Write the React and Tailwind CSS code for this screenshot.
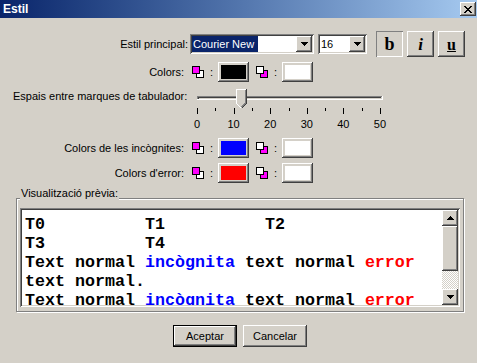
import React from "react";

const raised =
  "shadow-[inset_-1px_-1px_#404040,inset_1px_1px_#ffffff,inset_-2px_-2px_#808080,inset_2px_2px_#d4d0c8]";
const sunken =
  "shadow-[inset_1px_1px_#808080,inset_-1px_-1px_#ffffff,inset_2px_2px_#404040,inset_-2px_-2px_#d4d0c8]";

function Arrow({ up }) {
  const rows = [1, 3, 5, 7];
  const list = up ? rows : [...rows].reverse();
  return (
    <svg width="7" height="4" shapeRendering="crispEdges">
      {list.map((w, i) => (
        <rect key={i} x={(7 - w) / 2} y={i} width={w} height="1" fill="#000" />
      ))}
    </svg>
  );
}

function CloseGlyph() {
  const px = [];
  for (let i = 0; i < 7; i++) {
    px.push([i, i], [i + 1, i], [6 - i, i], [7 - i, i]);
  }
  return (
    <svg width="8" height="7" shapeRendering="crispEdges">
      {px.map(([x, y], i) => (
        <rect key={i} x={x} y={y} width="1" height="1" fill="#000" />
      ))}
    </svg>
  );
}

// two overlapping squares, the front one drawn last
function PairIcon({ front, back }) {
  return (
    <svg width="13" height="13" shapeRendering="crispEdges" className="shrink-0">
      <rect x="4.5" y="4.5" width="7" height="7" fill={back} stroke="#000" />
      <rect x="0.5" y="0.5" width="7" height="7" fill={front} stroke="#000" />
    </svg>
  );
}

function Swatch({ color }) {
  return (
    <div className={`w-[31px] h-[20px] p-[3px] bg-[#d4d0c8] ${raised}`}>
      <div className="w-full h-full" style={{ background: color }} />
    </div>
  );
}

function ColorRow({ label, color, mt }) {
  return (
    <div className={`flex items-center h-[20px] ${mt}`}>
      <div className="w-[184px] text-right">{label}</div>
      <div className="ml-[8px]">
        <PairIcon front="#ff00ff" back="#ffffff" />
      </div>
      <span className="w-[13px] text-center">:</span>
      <Swatch color={color} />
      <div className="ml-[7px]">
        <PairIcon front="#ffffff" back="#ff00ff" />
      </div>
      <span className="w-[13px] text-center">:</span>
      <Swatch color="#ffffff" />
    </div>
  );
}

function Slider() {
  const ticks = Array.from({ length: 11 }, (_, i) => Math.round(7 + i * 18.3));
  return (
    <svg width="200" height="30" shapeRendering="crispEdges">
      <rect x="7" y="10" width="185" height="1" fill="#808080" />
      <rect x="7" y="10" width="1" height="4" fill="#808080" />
      <rect x="8" y="11" width="183" height="1" fill="#404040" />
      <rect x="8" y="11" width="1" height="2" fill="#404040" />
      <rect x="7" y="13" width="186" height="1" fill="#ffffff" />
      <rect x="192" y="10" width="1" height="4" fill="#ffffff" />
      {ticks.map((x, i) => (
        <rect key={i} x={x} y="22" width="1" height={i % 2 === 0 ? 6 : 3} fill="#000" />
      ))}
      <polygon points="46,3 57,3 57,17 51.5,22.5 46,17" fill="#d4d0c8" />
      <path d="M46.5 17V3.5H55.5" stroke="#fff" fill="none" />
      <path d="M46.5 17.5L51 22" stroke="#fff" fill="none" />
      <path d="M56.5 3V17.5L51.5 22.5" stroke="#404040" fill="none" />
      <path d="M55.5 4V17L51.5 21" stroke="#808080" fill="none" />
    </svg>
  );
}

export default function App() {
  return (
    <div className="w-[477px] h-[363px] overflow-hidden bg-[#d4d0c8] font-['Liberation_Sans',Arial,sans-serif] text-[11px] leading-[13px] text-black">
      {/* title bar */}
      <div className="h-[18px] flex items-center justify-between pl-[3px] pr-[1px] bg-linear-to-r from-[#0a246a] to-[#a6caf0]">
        <span className="text-white font-bold text-[12px]">Estil</span>
        <div className={`w-[16px] h-[14px] flex items-center justify-center bg-[#d4d0c8] ${raised}`}>
          <CloseGlyph />
        </div>
      </div>

      {/* font row */}
      <div className="mt-[13px] h-[26px] flex items-center">
        <div className="w-[188px] text-right">Estil principal:</div>
        <div className={`ml-[2px] w-[124px] h-[20px] p-[2px] bg-white flex ${sunken}`}>
          <div className="flex-1">
            <div className="w-[66px] h-full bg-[#0a246a] text-white pl-[1px] leading-[16px]">Courier New</div>
          </div>
          <div className={`w-[16px] h-[16px] bg-[#d4d0c8] flex items-center justify-center ${raised}`}>
            <Arrow />
          </div>
        </div>
        <div className={`ml-[4px] w-[49px] h-[20px] p-[2px] bg-white flex ${sunken}`}>
          <div className="flex-1 pl-[1px] leading-[16px]">16</div>
          <div className={`w-[16px] h-[16px] bg-[#d4d0c8] flex items-center justify-center ${raised}`}>
            <Arrow />
          </div>
        </div>
        <div className="ml-[9px] flex gap-[4px]">
          <div className="w-[27px] h-[26px] flex items-center justify-center shadow-[inset_1px_1px_#808080,inset_-1px_-1px_#ffffff] font-['Liberation_Serif',serif] font-bold text-[18px]">
            b
          </div>
          <div className={`w-[27px] h-[26px] flex items-center justify-center ${raised} font-['Liberation_Serif',serif] font-bold italic text-[17px]`}>
            i
          </div>
          <div className={`w-[27px] h-[26px] flex items-center justify-center ${raised} font-['Liberation_Serif',serif] font-bold underline text-[16px]`}>
            u
          </div>
        </div>
      </div>

      <ColorRow label="Colors:" color="#000000" mt="mt-[5px]" />

      {/* tab spacing */}
      <div className="mt-[4px] h-[45px] flex">
        <div className="w-[190px] pl-[13px] h-[20px] leading-[20px]">Espais entre marques de tabulador:</div>
        <div className="w-[200px] flex flex-col">
          <Slider />
          <div className="mt-[3px] ml-[7px] w-[183px] flex justify-between">
            {[0, 10, 20, 30, 40, 50].map((n) => (
              <div key={n} className="w-0 flex justify-center whitespace-nowrap">
                {n}
              </div>
            ))}
          </div>
        </div>
      </div>

      <ColorRow label="Colors de les incògnites:" color="#0000ff" mt="mt-[7px]" />
      <ColorRow label="Colors d'error:" color="#ff0000" mt="mt-[5px]" />

      {/* preview group */}
      <div className="relative mt-[15px] ml-[16px] w-[448px] h-[114px] border border-[#808080] shadow-[inset_1px_1px_#ffffff,1px_1px_#ffffff] pl-[3px] pr-[3px] pt-[9px] pb-[4px]">
        <span className="absolute left-[3px] top-[-12px] px-[1px] bg-[#d4d0c8]">Visualització prèvia:</span>
        <div className={`h-[99px] p-[2px] bg-white flex ${sunken}`}>
          <div className="flex-1 overflow-hidden pl-[3px] pt-[5px] whitespace-pre font-['Liberation_Mono','Courier_New',monospace] font-bold text-[16.67px] leading-[19px]">
            <div>{"T0          T1          T2"}</div>
            <div>{"T3          T4"}</div>
            <div>
              Text normal <span className="text-[#0000ff]">incògnita</span> text normal{" "}
              <span className="text-[#ff0000]">error</span>
            </div>
            <div>text normal.</div>
            <div>
              Text normal <span className="text-[#0000ff]">incògnita</span> text normal{" "}
              <span className="text-[#ff0000]">error</span>
            </div>
          </div>
          <div className="w-[16px] flex flex-col">
            <div className={`h-[16px] bg-[#d4d0c8] flex items-center justify-center ${raised}`}>
              <Arrow up />
            </div>
            <div className={`h-[45px] bg-[#d4d0c8] ${raised}`} />
            <div className="flex-1 bg-[repeating-conic-gradient(#d4d0c8_0_25%,#ffffff_0_50%)] bg-[length:2px_2px]" />
            <div className={`h-[16px] bg-[#d4d0c8] flex items-center justify-center ${raised}`}>
              <Arrow />
            </div>
          </div>
        </div>
      </div>

      {/* buttons */}
      <div className="mt-[13px] flex">
        <div className="ml-[173px] w-[64px] h-[22px] border border-black">
          <div className={`w-full h-full flex items-center justify-center ${raised}`}>Aceptar</div>
        </div>
        <div className={`ml-[6px] w-[64px] h-[22px] flex items-center justify-center ${raised}`}>Cancelar</div>
      </div>
    </div>
  );
}
